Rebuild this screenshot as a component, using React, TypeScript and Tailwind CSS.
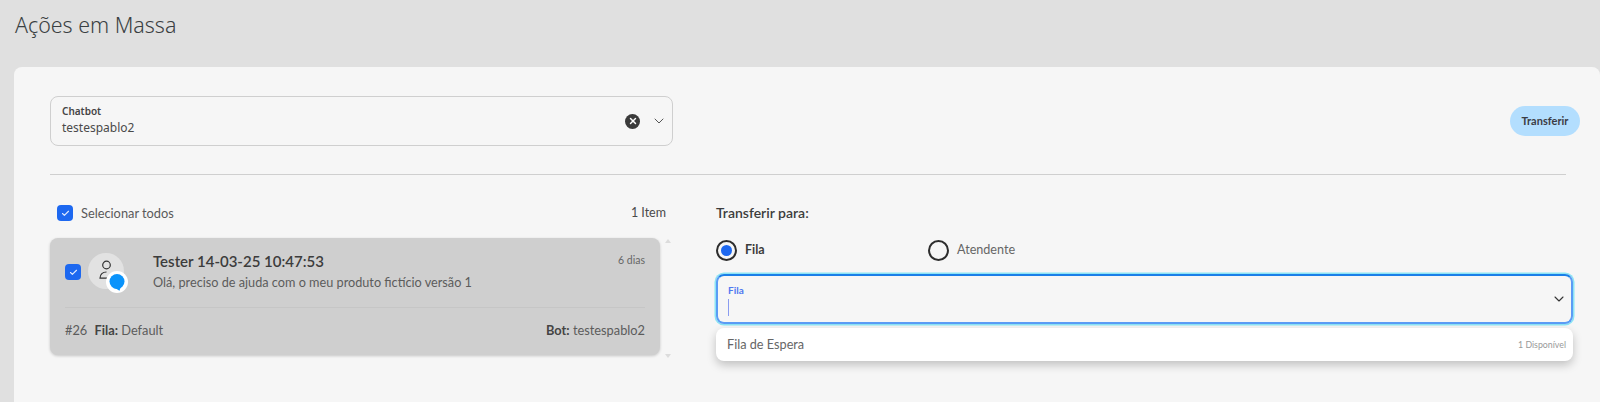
import { ChevronDown, Check, X } from "lucide-react";

const Box = () => (
  <span className="flex h-4 w-4 shrink-0 items-center justify-center rounded-[4px] bg-[#1d68f0]">
    <Check className="h-[9px] w-[9px] text-[#dfe9ff]" strokeWidth={3} />
  </span>
);

export default function App() {
  return (
    <div className="flex h-[402px] w-[1600px] flex-col overflow-hidden bg-[#e0e0e0] font-['Lato',sans-serif] text-[#4a4a4a]">
      <h1 className="flex h-[67px] shrink-0 items-start pl-[15px] pt-[10px] font-['Noto_Sans',sans-serif] text-[21.4px] font-light leading-[30px] text-[#3a3f42]">
        Ações em Massa
      </h1>
      <main className="ml-[14px] flex-1 rounded-t-lg bg-[#f6f6f6] pl-[36px] pr-[20px] pt-[29px]">
        <div className="flex items-start justify-between">
          <div className="flex h-[50px] w-[623px] items-center justify-between rounded-lg border border-[#cfcfcf] pb-[2px] pl-[11px] pr-[5px] font-['Noto_Sans',sans-serif]">
            <div className="flex flex-col">
              <span className="text-[10px] font-semibold leading-[14px] text-[#444]">Chatbot</span>
              <span className="text-[12px] leading-[19px] text-[#4a4a4a]">testespablo2</span>
            </div>
            <div className="mt-[2px] flex items-center gap-[11px]">
              <span className="flex h-[15px] w-[15px] items-center justify-center rounded-full bg-[#3a3a3a]">
                <X className="h-2.5 w-2.5 text-white" strokeWidth={3.5} />
              </span>
              <ChevronDown className="h-[16px] w-[16px] text-[#555]" strokeWidth={1.5} />
            </div>
          </div>
          <button className="mt-[10px] h-[30px] w-[70px] rounded-full bg-[#b3defe] text-[11px] font-bold text-[#3c3c44]">
            Transferir
          </button>
        </div>
        <div className="mt-[28px] w-[1516px] border-t border-[#cfcfcf]" />
        <div className="flex">
          <section className="w-[622px]">
            <div className="mt-[30px] flex items-center justify-between pl-[7px] pr-[6px] text-[12.5px] leading-4">
              <label className="flex items-center gap-[8px] text-[12.8px] text-[#5a5a5a]">
                <Box />
                Selecionar todos
              </label>
              <span>1 Item</span>
            </div>
            <div className="mt-[17px] flex">
              <article className="h-[117px] w-[610px] rounded-lg bg-[#cfcfcf] px-[15px] shadow-[0_1px_3px_rgba(0,0,0,0.2)]">
                <div className="flex h-[70px] items-start border-b border-[#c6c6c6] pt-[16px]">
                  <span className="mt-[10px]"><Box /></span>
                  <div className="relative -mt-[1px] ml-[7px] flex h-[36px] w-[36px] shrink-0 items-center justify-center rounded-full bg-[#e2e2e2]">
                    <svg viewBox="0 0 16 20" className="mb-[2px] h-[20px] w-[16px]" fill="none" stroke="#333" strokeWidth="1.2">
                      <circle cx="8.5" cy="5" r="3.8" />
                      <path d="M8.5 12c-3.8 0-6.5 2.2-6.5 6.2h7" />
                    </svg>
                    <span className="absolute -bottom-[4px] -right-[4px] flex h-[22px] w-[22px] items-center justify-center rounded-full bg-white">
                      <svg viewBox="0 0 16 17" className="mt-[1px] h-[17px] w-[16px]">
                        <circle cx="8" cy="7.5" r="7.5" fill="#0a93fb" />
                        <path d="M6 14l4.5 2.8L12 12z" fill="#0a93fb" />
                      </svg>
                    </span>
                  </div>
                  <div className="ml-[29px] -mt-[2px] flex-1">
                    <div className="flex items-start justify-between">
                      <span className="text-[15px] font-semibold leading-[18px] text-[#3c3c3c]">Tester 14-03-25 10:47:53</span>
                      <span className="mt-[1px] text-[10.5px] leading-[14px] text-[#666]">6 dias</span>
                    </div>
                    <p className="mt-[4px] text-[12.7px] leading-[17px] text-[#5c5c5c]">Olá, preciso de ajuda com o meu produto fictício versão 1</p>
                  </div>
                </div>
                <div className="flex items-center justify-between pt-[14px] text-[12.8px] leading-[17px] text-[#5c5c5c]">
                  <span>#26 <b className="ml-1 font-bold text-[#444]">Fila:</b> Default</span>
                  <span><b className="font-bold text-[#444]">Bot:</b> testespablo2</span>
                </div>
              </article>
              <div className="ml-[5px] flex h-[120px] flex-col justify-between pt-[1px]">
                <span className="h-0 w-0 border-x-[3px] border-b-[4px] border-x-transparent border-b-[#dcdcdc]" />
                <span className="h-0 w-0 border-x-[3px] border-t-[4px] border-x-transparent border-t-[#dcdcdc]" />
              </div>
            </div>
          </section>
          <section className="ml-[44px] w-[857px]">
            <h2 className="mt-[29px] text-[14px] font-semibold leading-[18px] text-[#3c3c3c]">Transferir para:</h2>
            <div className="mt-[17px] flex h-[22px] items-center">
              <div className="flex w-[212px] items-center gap-[8px]">
                <span className="flex h-[21px] w-[21px] items-center justify-center rounded-full border-2 border-[#2d2d2d]">
                  <span className="h-[11px] w-[11px] rounded-full bg-[#1d68f0]" />
                </span>
                <span className="text-[12.5px] font-bold text-[#3c3c3c]">Fila</span>
              </div>
              <div className="flex items-center gap-[8px]">
                <span className="h-[21px] w-[21px] rounded-full border-2 border-[#2d2d2d]" />
                <span className="text-[12.6px] text-[#666]">Atendente</span>
              </div>
            </div>
            <div className="mt-[13px] flex h-[50px] items-center justify-between rounded-lg border-2 border-[#5b9cf5] border-t-[#1a7fe8] pl-[10px] pr-[4px] shadow-[0_0_0_1.5px_#8be4f5]">
              <div className="flex flex-col">
                <span className="text-[10px] font-bold leading-[14px] text-[#4f78f0]">Fila</span>
                <span className="mt-[2px] h-[17px] w-[1px] bg-[#8a9cf0]" />
              </div>
              <ChevronDown className="h-[16px] w-[16px] text-[#333]" strokeWidth={1.6} />
            </div>
            <div className="mt-[4px] flex h-[33px] items-center justify-between rounded-lg bg-white pl-[11px] pr-[7px] shadow-[0_4px_10px_rgba(0,0,0,0.22)]">
              <span className="text-[12.7px] text-[#666]">Fila de Espera</span>
              <span className="text-[8.8px] text-[#999]">1 Disponível</span>
            </div>
          </section>
        </div>
      </main>
    </div>
  );
}
